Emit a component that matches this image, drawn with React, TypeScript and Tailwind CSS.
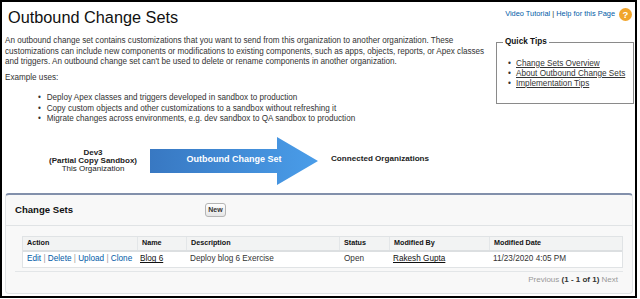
import React from "react";

const uses = [
  "Deploy Apex classes and triggers developed in sandbox to production",
  "Copy custom objects and other customizations to a sandbox without refreshing it",
  "Migrate changes across environments, e.g. dev sandbox to QA sandbox to production",
];

const tips = ["Change Sets Overview", "About Outbound Change Sets", "Implementation Tips"];

const cols = ["Action", "Name", "Description", "Status", "Modified By", "Modified Date"];

function HelpIcon() {
  return (
    <svg width="13" height="13" viewBox="0 0 13 13">
      <circle cx="6.5" cy="6.5" r="6.5" fill="#f1a52c" />
      <text x="6.5" y="10" textAnchor="middle" fontSize="9.5" fontWeight="bold" fill="#fff" fontFamily="Liberation Sans, Arial, sans-serif">
        ?
      </text>
    </svg>
  );
}

function Arrow() {
  return (
    <svg width="168" height="48" viewBox="0 0 168 48" className="shrink-0">
      <defs>
        <linearGradient id="arrowFill" x1="0" y1="0" x2="1" y2="0">
          <stop offset="0" stopColor="#3878c2" />
          <stop offset="1" stopColor="#4a9de9" />
        </linearGradient>
      </defs>
      <polygon points="0,12 127,12 127,0 168,24 127,48 127,36 0,36" fill="url(#arrowFill)" />
      <text x="84" y="24.8" textAnchor="middle" fontSize="9" fontWeight="bold" fill="#fff" fontFamily="Liberation Sans, Arial, sans-serif">
        Outbound Change Set
      </text>
    </svg>
  );
}

export default function App() {
  return (
    <div className="w-[637px] h-[298px] border-2 border-black bg-white flex flex-col overflow-hidden font-['Liberation_Sans',Arial,sans-serif] text-[#333]">
      {/* Top: intro + quick tips */}
      <div className="flex">
        <div className="w-[480px] pl-[3px]">
          <h1 className="mt-[5px] ml-[3px] text-[16.3px] leading-[20px] text-[#111]">Outbound Change Sets</h1>
          <p className="mt-[9px] text-[8.15px] leading-[10.5px] whitespace-nowrap">
            An outbound change set contains customizations that you want to send from this organization to another organization. These
            <br />
            customizations can include new components or modifications to existing components, such as apps, objects, reports, or Apex classes
            <br />
            and triggers. An outbound change set can't be used to delete or rename components in another organization.
          </p>
          <p className="mt-[5px] text-[8.15px] leading-[10.5px]">Example uses:</p>
          <ul className="mt-[10px] pl-[33px] text-[8.15px] leading-[10.5px]">
            {uses.map((u) => (
              <li key={u} className="flex whitespace-nowrap">
                <span className="w-[8.7px]">•</span>
                {u}
              </li>
            ))}
          </ul>
        </div>
        <div className="flex-1">
          <div className="mt-[5px] h-[14px] flex items-center justify-end gap-[4px] pr-[3px]">
            <span className="text-[7.4px] text-[#015ba7]">
              Video Tutorial <span className="text-[#333]">|</span> Help for this Page
            </span>
            <HelpIcon />
          </div>
          <fieldset className="mt-[16px] ml-[14px] w-[138px] h-[67px] border border-[#8a8a8a] px-[6px] pt-[11.5px]">
            <legend className="px-[2px] text-[8.2px] leading-[10px] font-bold text-[#111]">Quick Tips</legend>
            <ul className="pl-[5px] text-[8.2px] leading-[10px]">
              {tips.map((t) => (
                <li key={t} className="flex whitespace-nowrap">
                  <span className="w-[8px]">•</span>
                  <a className="underline text-[#333]">{t}</a>
                </li>
              ))}
            </ul>
          </fieldset>
        </div>
      </div>

      {/* Diagram */}
      <div className="mt-[12.5px] h-[48px] flex items-center">
        <div className="ml-[41px] w-[100px] text-center text-[8px] leading-[8.2px] text-[#222]">
          <div className="font-bold">Dev3</div>
          <div className="font-bold">(Partial Copy Sandbox)</div>
          <div>This Organization</div>
        </div>
        <div className="ml-[7px]">
          <Arrow />
        </div>
        <div className="ml-[13px] -mt-[3px] text-[8.1px] font-bold text-[#222]">Connected Organizations</div>
      </div>

      {/* Change Sets panel */}
      <div className="mt-[8px] ml-[3px] mr-[2px] mb-[2px] flex-1 rounded-[4px] border border-t-[2px] border-[#e0e3e5] border-t-[#8290ab] bg-[#f8f8f8] flex flex-col">
        <div className="h-[31px] flex items-center border-b border-[#e0e3e5] pl-[9px]">
          <span className="w-[190px] text-[9.6px] font-bold text-[#111]">Change Sets</span>
          <button className="h-[14px] w-[21px] rounded-[3px] border border-[#b5b5b5] bg-gradient-to-b from-white to-[#e6e6e6] text-[7px] font-bold text-[#333] flex items-center justify-center">
            New
          </button>
        </div>
        <div className="pt-[10px] pl-[16px]">
          <div className="w-[601px] border border-[#e0e3e5] bg-white">
            <div className="grid grid-cols-[114px_49px_153px_50px_100px_135px] h-[15px] bg-[#f2f3f3] border-b-2 border-[#dcdfe1]">
              {cols.map((c, i) => (
                <div key={c} className={`pl-[4px] flex items-center text-[7.2px] font-bold text-[#111] ${i > 0 ? "border-l border-[#e3e6e8]" : ""}`}>
                  {c}
                </div>
              ))}
            </div>
            <div className="grid grid-cols-[114px_49px_153px_50px_100px_135px] h-[15px] text-[8.2px] items-center">
              <div className="pl-[4px] whitespace-nowrap text-[#015ba7]">
                Edit <span className="text-[#999]">|</span> Delete <span className="text-[#999]">|</span> Upload{" "}
                <span className="text-[#999]">|</span> Clone
              </div>
              <div className="pl-[3px] underline text-[#111]">Blog 6</div>
              <div className="pl-[4px]">Deploy blog 6 Exercise</div>
              <div className="pl-[5px]">Open</div>
              <div className="pl-[4px] underline text-[#111]">Rakesh Gupta</div>
              <div className="pl-[4px]">11/23/2020 4:05 PM</div>
            </div>
          </div>
        </div>
        <div className="mt-[3px] ml-[9px] w-[608px] border-t border-[#e3e6e8]"></div>
        <div className="mt-[3px] w-[612px] text-right text-[8px] leading-[10px] text-[#999]">
          Previous <span className="font-bold text-[#333]">(1 - 1 of 1)</span> Next
        </div>
      </div>
    </div>
  );
}
